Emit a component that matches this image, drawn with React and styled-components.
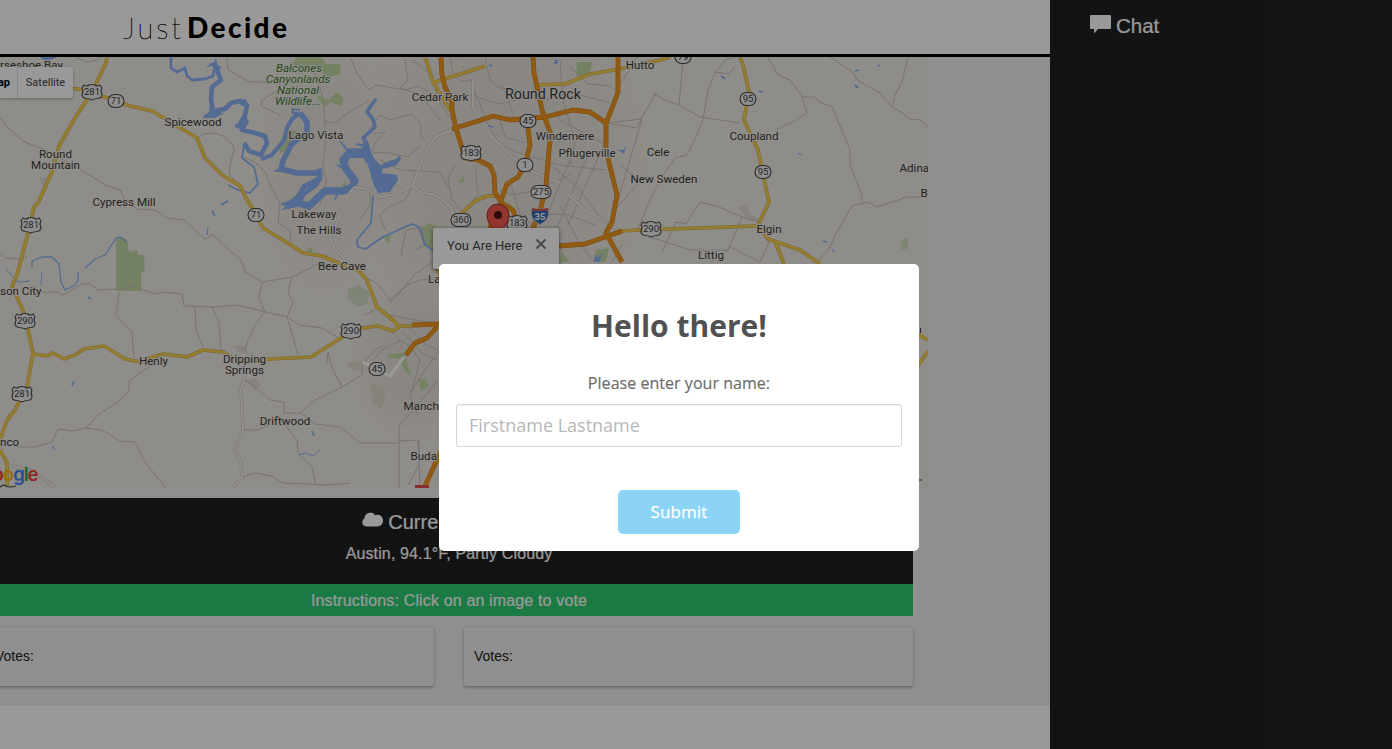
import React from "react";
import styled, { createGlobalStyle } from "styled-components";

const GlobalStyle = createGlobalStyle`
  * { box-sizing: border-box; }
  html, body { margin: 0; padding: 0; height: 749px; overflow: hidden; background: #fff; }
  body { font-family: "Liberation Sans", Arial, sans-serif; color: #212121; }
`;

const Shell = styled.div`
  position: relative;
  display: flex;
  width: 1392px;
  height: 749px;
  overflow: hidden;
`;

const Main = styled.main`
  width: 1050px;
  height: 749px;
  overflow: hidden;
  display: flex;
  flex-direction: column;
  background: #fff;
`;

const Header = styled.header`
  height: 57px;
  flex: none;
  border-bottom: 3px solid #000;
  padding-left: 123px;
  display: flex;
  align-items: center;
  color: #000;
  font-family: Lato, sans-serif;
`;

const LogoThin = styled.span`
  font-size: 29px;
  font-weight: 100;
  letter-spacing: 3px;
  width: 64px;
  white-space: nowrap;
  -webkit-text-stroke: 0.35px #000;
`;

const LogoBold = styled.span`
  font-size: 28px;
  font-weight: 900;
  letter-spacing: 2.4px;
`;

const Page = styled.div`
  height: 649px;
  background: #efefef;
  display: flex;
  flex-direction: column;
`;

const MapFrame = styled.section`
  position: relative;
  width: 928px;
  height: 431px;
  flex: none;
  overflow: hidden;
`;

const MapSvg = styled.svg`
  display: block;
  font-family: Roboto, sans-serif;
`;

const MapControls = styled.div`
  position: absolute;
  top: 10px;
  left: 0;
  width: 73px;
  height: 31px;
  display: flex;
  align-items: center;
  background: #fff;
  border-radius: 0 2px 2px 0;
  box-shadow: 0 1px 3px rgba(0, 0, 0, 0.3);
  font: 11px Roboto, sans-serif;
  color: #444;
`;

const MapTab = styled.span`
  width: ${(p) => p.$width}px;
  height: 100%;
  display: flex;
  align-items: center;
  justify-content: ${(p) => (p.$active ? "flex-end" : "center")};
  padding-right: ${(p) => (p.$active ? "7px" : "0")};
  font-weight: ${(p) => (p.$active ? 700 : 400)};
  color: ${(p) => (p.$active ? "#000" : "#444")};
  border-right: ${(p) => (p.$active ? "1px solid #e2e2e2" : "0")};
`;

const InfoWindow = styled.div`
  position: absolute;
  left: 433px;
  top: 171px;
  width: 126px;
  height: 41px;
  padding: 10px 12px 0 14px;
  display: flex;
  justify-content: space-between;
  background: #fff;
  border-radius: 2px;
  box-shadow: 0 1px 4px rgba(0, 0, 0, 0.6);
  font: 13px/15px Roboto, sans-serif;
  color: #444;
`;

const CloseIcon = styled.svg`
  margin-top: 0;
`;

const Wide = styled.div`
  width: 928px;
  margin-left: -15px;
`;

const Weather = styled(Wide)`
  height: 86px;
  margin-top: 10px;
  padding-top: 11px;
  background: #212121;
  color: #fff;
  display: flex;
  flex-direction: column;
  align-items: center;
`;

const WeatherTitle = styled.div`
  display: flex;
  align-items: center;
  gap: 5px;
  height: 26px;
  font-size: 20px;
  -webkit-text-stroke: 0.2px #fff;
  svg { margin-top: -6px; }
`;

const WeatherText = styled.div`
  margin-top: 8px;
  font-size: 16px;
  line-height: 21px;
  letter-spacing: 0.13px;
  -webkit-text-stroke: 0.2px #fff;
`;

const Instructions = styled(Wide)`
  height: 32px;
  background: #2ecc71;
  color: #fff;
  font-size: 16px;
  line-height: 33px;
  letter-spacing: 0.15px;
  text-align: center;
  -webkit-text-stroke: 0.2px #fff;
`;

const Cards = styled(Wide)`
  margin-top: 11px;
  display: flex;
  justify-content: space-between;
`;

const Card = styled.div`
  width: 449px;
  height: 59px;
  padding-left: 10px;
  font-size: 14px;
  line-height: 59px;
  color: #212121;
  background: #efefef;
  border-radius: 2px;
  box-shadow: 0 2px 3px rgba(0, 0, 0, 0.22), 0 0 2px rgba(0, 0, 0, 0.18);
`;

const Sidebar = styled.aside`
  flex: 1;
  background: #212121;
  color: #fff;
  padding: 13px 0 0 40px;
`;

const ChatTitle = styled.div`
  display: flex;
  align-items: center;
  gap: 5px;
  font-size: 20.5px;
  line-height: 26px;
  -webkit-text-stroke: 0.2px #fff;
  svg { margin-top: -3px; }
`;

const Overlay = styled.div`
  position: absolute;
  inset: 0;
  background: rgba(0, 0, 0, 0.4);
`;

const Modal = styled.form`
  position: absolute;
  left: 439px;
  top: 264px;
  width: 480px;
  height: 287px;
  padding: 17px;
  border-radius: 5px;
  background: #fff;
  font-family: "Open Sans", sans-serif;
  display: flex;
  flex-direction: column;
  align-items: center;
`;

const Title = styled.h2`
  margin: 25px 0 0;
  height: 40px;
  font-size: 30px;
  line-height: 40px;
  font-weight: 700;
  color: #515151;
`;

const Prompt = styled.p`
  margin: 24px 0 0;
  font-size: 16px;
  line-height: 26px;
  letter-spacing: 0.04px;
  color: #6b6b6b;
  -webkit-text-stroke: 0.15px #6b6b6b;
`;

const NameInput = styled.input`
  width: 446px;
  height: 43px;
  margin: 8px 0 0;
  padding: 0 12px 2px;
  border: 1px solid #d7d7d7;
  border-radius: 3px;
  box-shadow: inset 0 1px 1px rgba(0, 0, 0, 0.06);
  font: 18px "Open Sans", sans-serif;
  outline: none;
  &::placeholder { color: #b8b8b8; opacity: 1; }
`;

const Submit = styled.button`
  width: 122px;
  height: 44px;
  margin-top: 43px;
  padding: 0 0 2px;
  border: 0;
  border-radius: 5px;
  background: #8cd4f5;
  color: #fff;
  font: 17px "Open Sans", sans-serif;
  letter-spacing: 0.1px;
  -webkit-text-stroke: 0.25px #fff;
`;

const minorRoads = [
  "0,118 10,130 25,142 45,150 78,168 105,185 120,190 125,200 137,209 155,210 167,218 184,220 205,239 212,235 241,260 245,272 262,282 292,277 318,264",
  "76,57 87,62 97,60 102,57", "197,138 203,134 215,133 223,136 233,145 234,151 230,165 229,173 235,181 240,186",
  "244,157 256,163 266,173 270,185 276,195 280,205 278,223 290,230 291,242", "0,253 5,258 20,259 27,257",
  "40,292 57,292 63,295 82,284 90,284 98,290 119,289 135,287 155,294 163,292 182,294 184,306 215,307 237,305 262,311 287,317 300,325 322,328 342,340",
  "262,282 259,297 265,312 255,325 248,340 245,350", "292,277 288,292 293,303 287,317 291,330 298,355",
  "119,292 116,315 132,332 134,358", "195,307 196,330 203,347", "212,307 219,322 221,350",
  "328,352 332,368 342,387", "245,380 258,390 270,400 284,402 284,413 301,413 315,424 340,427 360,443 399,443",
  "300,413 315,400 342,387 362,375 362,365 375,350 385,345", "150,366 130,380 128,392 115,404 98,415 86,428",
  "17,447 35,447 52,442 58,429 73,431 86,428 102,430 120,441 135,442 145,462 166,488",
  "243,430 256,430 270,425", "285,425 297,440 298,453 312,467 316,485", "242,477 255,473 271,476 283,483 328,485 350,483",
  "683,60 679,105", "652,93 665,100 679,105 700,117 740,123", "735,57 725,60 714,75 708,90 703,120 697,135 687,155 675,158 660,180 650,200 638,229",
  "714,72 729,74 735,66", "768,57 778,75 790,80 802,97 815,97 819,102 832,107 850,150 850,165 862,195 862,203",
  "802,97 807,113 793,122 775,130", "830,57 853,72 857,80 880,93 892,107 903,113 909,119 920,120 928,127",
  "908,57 902,82 895,95 892,107", "920,197 907,197 877,207 868,202 852,206 838,230 828,250 817,262",
  "700,202 717,206 742,217 760,222", "700,202 686,224 676,222 662,253", "742,217 728,250 710,262", "640,233 665,242 690,250 728,250 730,247 760,262 770,240",
  "227,57 228,70 250,82 280,82 278,90 262,100 261,106 280,115", "290,62 315,73 323,98 326,138 323,166 326,180 320,205",
  "350,57 358,75 369,90 376,85 405,90 417,86 430,92", "323,121 335,123 345,115 370,100", "370,128 380,115 390,120 412,114 420,123 421,137 425,140",
  "373,134 385,132 375,143 372,152 389,153 408,157 421,145", "385,230 380,215 390,206 405,200 413,185", "370,193 370,205 360,220",
  "415,250 425,245 418,228 406,230 401,255", "450,57 454,76 461,81 473,81", "405,60 408,80 400,88 420,95 440,120",
  "485,57 490,80 500,88 534,92", "475,97 500,104 535,95", "474,90 486,120 500,145 525,155 560,165 606,170", "500,120 505,137 525,143",
  "502,85 515,118", "560,60 563,100 575,140 570,165", "570,67 588,84 610,86 618,92", "543,100 580,95 610,103", "555,110 560,120 606,145", "606,123 637,128 643,115 656,93",
  "620,85 637,57", "510,180 520,215 540,230", "550,164 580,190 601,219", "570,160 545,220", "606,140 568,225", "590,150 556,230", "500,190 514,195 535,190 570,175",
  "475,165 478,195 460,213", "606,123 642,119 608,234", "620,165 640,181 615,210", "535,215 565,214 595,225", "560,205 580,245 595,262", "622,245 612,262",
  "407,325 425,344 438,350", "402,331 424,355 438,360", "399,340 410,346 420,360 415,380 410,395 418,415", "440,350 425,370 411,392", "390,315 415,320 438,323", "399,488 399,426 418,405 438,380",
  "390,300 407,285 420,280 438,279", "365,315 380,307", "419,440 419,465 408,485", "367,278 378,284 391,302 398,295 415,274 435,260", "400,341 382,350 375,358",
  "399,441 418,440 420,485", "328,352 327,363", "380,160 400,170 440,172 450,190", "455,165 448,178 452,200 462,212", "412,60 432,75 438,100 452,120",
];
const whiteRoads = [
  "453,130 435,137 423,157 413,185 396,194 380,197 367,189 355,187 350,192 338,220 330,237 333,246 347,263",
  "413,185 420,192 435,195 450,206 455,218", "459,57 473,80 473,107 490,135 510,155 533,172 560,183 567,193 585,210 600,218 622,232",
  "245,375 241,390 243,430 235,450 241,463 242,477 232,488", "8,465 30,470 43,478 55,488",
];
const yellowRoads = [
  "107,57 106,63 92,92 75,118 59,146 52,172 38,203 34,207 27,237 17,275 12,286 25,315 28,330 33,353 27,387 15,410 7,420 0,440",
  "70,88 85,90 116,101 130,106 152,111 167,120 197,138 205,158 222,175 240,186 246,198 255,213 263,228 283,240 303,253 322,256 348,267 358,270 367,280 377,307 393,320 400,328",
  "33,354 47,356 53,353 64,359 75,355 84,349 104,346 125,359 140,362 150,358 163,354 187,357 203,350 223,352 232,358 250,362 270,359 290,358 311,357 330,345 350,332 363,328 378,326 393,331 400,326 413,326",
  "0,450 7,463 7,486", "620,231 640,230 757,226", "740,57 743,65 749,92 744,120 758,150 763,175 769,202 758,225 768,239 800,250 820,264",
  "775,241 784,264", "535,85 565,84 590,74 620,69 660,60 670,57", "425,57 433,82 450,110", "435,82 467,72 485,66",
  "460,215 475,201 487,196 497,196", "436,262 439,274 442,282", "917,334 928,340", "928,351 917,367",
];
const orangeRoads = [
  "441,57 442,75 445,87 452,102 452,110 456,128 465,158 478,160 490,166 494,175 495,193 502,203 513,210 518,224",
  "452,129 475,122 493,116 510,120 545,117 573,110 590,112 606,123", "528,128 530,145 525,165 518,177 507,184 500,203",
  "533,57 534,73 542,110 551,135 549,150 546,185 540,212 532,230", "618,57 618,92 612,108 606,123 606,150 617,195 612,222 606,233 622,262",
  "559,246 585,244 622,231", "412,325 440,324", "437,327 427,338 415,343 406,355", "441,451 425,486", "490,229 494,211",
];
const lake = [
  ["171,57 171,68 177,72 185,68 187,76 192,80 205,79 213,76 215,66", 2.8],
  ["215,66 219,75 221,80 212,87 211,99 213,111", 4.5], ["213,111 225,109 231,103 240,101 247,105 245,115 240,124 242,130 255,133 265,136 267,143 261,155 249,151 244,143", 4.6],
  ["244,145 242,158 254,167 258,184 250,193 238,190 228,185", 1.8], ["261,159 272,155 284,140 287,128 292,119 300,113", 4.2],
  ["300,113 307,122 307,133 298,139 291,145 283,161 281,169 297,173 320,173 319,179 304,187 298,198 287,205", 5.5],
  ["287,205 298,203 309,206 325,191 343,191 352,187 355,181 346,169 343,160 350,152 363,152 371,158", 7.5],
  ["371,160 367,143 363,138 375,127 373,119 367,112 370,107 376,99", 3.6], ["383,167 395,164 400,157", 3.6],
  ["373,196 371,223 357,240 358,247 366,249 381,238 407,226 413,224 420,228 425,245 434,251", 1.8],
  ["32,267 32,261 42,257 52,257 59,264 61,282 65,290 75,285 78,280 78,272", 1.3], ["85,268 95,259 105,255 116,238 120,237 127,242", 1.3],
  ["42,272 41,285", 1], ["6,269 18,282 30,281", 1], ["221,205 228,201", 1.7], ["212,211 215,216", 1.5], ["208,227 207,235", 1],
  ["72,386 74,381", 1.7], ["52,446 55,450", 1.2], ["88,297 91,299", 1.8], ["299,455 306,453 313,456 320,450", 1], ["312,431 314,436", 1.7], ["489,65 492,66", 2], ["555,64 557,60", 3],
  ["488,126 494,127", 1.7], ["721,76 725,79", 2], ["759,91 763,92", 1.8], ["855,85 858,88", 2], ["855,71 859,70", 1.6], ["798,153 801,155", 1.3], ["823,241 827,242", 1.6], ["833,249 834,252", 1.3], ["878,65 880,66", 1.5],
  ["213,64 207,67", 1.3], ["249,106 245,109", 1.5], ["365,146 356,144", 2], ["348,151 340,141", 2], ["337,165 346,169", 2], ["335,200 338,192", 2],
  ["282,203 287,205", 3], ["275,171 283,170", 2.5], ["316,171 322,169", 2.5], ["204,117 216,110", 3], ["235,125 243,126", 3], ["300,110 291,109", 2],
];
const parks = [
  "116,240 119,237 125,238 128,242 128,249 131,252 137,250 138,255 144,255 145,269 141,274 141,291 116,291",
  "297,57 322,57 326,64 341,64 340,74 330,77 316,70 302,73 292,66", "318,95 329,100 336,92 344,98 341,106 330,102 326,107 317,99",
  "290,129 298,132 291,150 280,153 279,147", "384,237 392,235 388,245", "421,228 430,223 438,229 433,248 424,246", "577,62 592,62 589,77 576,75",
  "389,354 404,353 411,375 405,372 400,359 388,357", "418,378 426,380 429,387 421,390",
  "596,250 609,248 606,262 594,262", "341,187 346,180 346,187", "308,249 312,247 312,253 304,255", "458,182 464,176 464,183", "562,252 570,262 560,262",
];
const labels = [
  ["rseshoe Bay", 0, 69, "start"], ["Spicewood", 193, 126], ["Round", 55.5, 157.5], ["Mountain", 55.5, 168.500], ["Cypress Mill", 124, 206], ["Lago Vista", 316, 139],
  ["Lakeway", 314, 218], ["The Hills", 319, 234], ["Bee Cave", 342, 270], ["son City", 0, 295, "start"], ["Henly", 153.5, 364.5], ["Dripping", 244.5, 362.500], ["Springs", 244.5, 373.500],
  ["Driftwood", 285, 425], ["nco", 0, 446, "start"], ["Cedar Park", 440, 101], ["Windemere", 565, 140], ["Pflugerville", 587, 157], ["Cele", 658, 156], ["New Sweden", 664, 183],
  ["Hutto", 640, 69], ["Coupland", 754, 140], ["Littig", 711, 259], ["Elgin", 769, 233], ["Adina", 899.5, 172, "start"], ["B", 920.5, 197, "start"], ["La", 428, 283, "start"], ["Manch", 403.5, 410, "start"], ["Buda", 410.5, 460, "start"],
];
const shields = [
  ["281", 92, 92, "us"], ["71", 116, 101], ["281", 31, 225, "us"], ["290", 25, 321, "us"], ["281", 22, 394, "us"], ["71", 256, 215], ["290", 351, 331, "us"], ["45", 377, 369],
  ["183", 471, 153, "us"], ["45", 528, 121], ["1", 525, 165], ["275", 541, 192], ["360", 461, 220], ["183", 517, 223, "us"], ["290", 651, 229, "us"], ["95", 748, 99], ["95", 763, 172], ["79", 683, 57],
];

function Lines({ items, color, width, casing }) {
  return (
    <g fill="none" strokeLinejoin="round">
      {casing && items.map((p, i) => <polyline key={"c" + i} points={p} stroke={casing} strokeWidth={width + 1} />)}
      {items.map((p, i) => <polyline key={i} points={p} stroke={color} strokeWidth={width} />)}
    </g>
  );
}

function Shield({ text, x, y, kind }) {
  const w = text.length === 3 ? 20 : 16;
  return (
    <g transform={`translate(${x} ${y})`}>
      {kind === "us" ? (
        <path d="M-8-7Q-5-5-3-7Q0-8 3-7Q5-5 8-7L10-4Q8-1 10 2Q10 6 6 6.500Q3 6.500 0 8Q-3 6.500-6 6.500Q-10 6-10 2Q-8-1-10-4Z" fill="#ededed" stroke="#4b4b4b" strokeWidth="1.1" />
      ) : (
        <rect x={-w / 2} y="-6.500" width={w} height="13" rx="6.5" fill="#ededed" stroke="#4b4b4b" strokeWidth="1.1" />
      )}
      <text y="3.4" fontSize="9.500" textAnchor="middle" fill="#3c3c3c">{text}</text>
    </g>
  );
}

function AreaMap() {
  return (
    <MapSvg width="928" height="431" viewBox="0 57 928 431">
      <defs>
        <radialGradient id="urban">
          <stop offset="0.5" stopColor="#e2dcd4" />
          <stop offset="1" stopColor="#e2dcd4" stopOpacity="0" />
        </radialGradient>
      </defs>
      <rect y="57" width="928" height="431" fill="#efebe4" />
      <ellipse cx="500" cy="165" rx="150" ry="190" fill="url(#urban)" opacity=".6" />
      <ellipse cx="325" cy="165" rx="70" ry="130" fill="url(#urban)" opacity=".5" />
      <ellipse cx="415" cy="360" rx="65" ry="85" fill="url(#urban)" opacity=".6" />
      <g fill="#e0d9cf">
        <path d="M234 345h10l5 9-12-2zM245 380l10-2 6 8-6 4zM346 363l14-3 5 12-13-2zM370 382l15 7v12l-4 8-8-5zM738 208l8-4 4 9 8 6-8 3zM39 178l9 0-5 8z" />
      </g>
      {parks.map((p, i) => <polygon key={i} points={p} fill="#c4d8a5" />)}
      <polygon points="348,289 358,285 370,292 367,304 358,307 347,298" fill="#d3dcc5" />
      <polygon points="900,240 907,238 909,248 902,250" fill="#d3dcc5" />
      <Lines items={minorRoads} color="#c9c0b9" width={1} />
      <g fill="none" stroke="#8bb1f6" strokeLinejoin="round">
        {lake.map(([p, w], i) => <polyline key={i} points={p} strokeWidth={w} />)}
      </g>
      <g fill="#8bb1f6">
        <polygon points="365,137 362,145 363,150 355,150 343,155 340,163 345,167 350,158 363,158 368,165 373,183 378,193 390,192 398,180 397,175 382,173 383,167 397,165 400,158 392,160 380,165 373,157 368,147" />
        <path d="M288 203l10-10 6-1 12-11 7-3-6 9-12 9-5 10-14 3-5 2zM210 99l5 12 9 2-9 5-12 0 6-6zM241 124l5-8 3 6-4 7-10-1zM213 67l-4-3 5-2 2-4 2 8 3 0-1 4zM235 100l11-1 3 9-8-3zM292 110l13 7 5 9-6-3-4-8-9-1zM595 254l3 4 4-5-2 9h-6zM617 149l6 1 3-4-2 8zM40 57l5 4 5-1 8-3z" />
      </g>
      <Lines items={whiteRoads} color="#f4f2ee" width={2} casing="#c2bbb3" />
      <polyline points="404,357 390,376 363,362" fill="none" stroke="#fff" strokeWidth="3" />
      <Lines items={yellowRoads} color="#f6d052" width={2.7} casing="#cfa94d" />
      <Lines items={orangeRoads} color="#f0971f" width={3.8} casing="#cb7b18" />
      {shields.map(([t, x, y, k], i) => <Shield key={i} text={t} x={x} y={y} kind={k} />)}
      <g transform="translate(540 216)">
        <path d="M-8-7L8-7Q11 3 0 8.500Q-11 3-8-7Z" fill="#3569b5" stroke="#d8d8d8" strokeWidth=".7" />
        <path d="M-8-8Q0-6 8-8V-5H-8Z" fill="#d25357" />
        <text y="4" fontSize="9.5" fontWeight="700" textAnchor="middle" fill="#fff">35</text>
      </g>
      <path d="M415 488v-3h14v3z" fill="#e34b4b" />
      <path d="M0 487q3-3 6-1q4 2 10 0" fill="none" stroke="#444" strokeWidth="1.2" />
      <g fontSize="11.6" fill="#3a3835" stroke="#f1eee8" strokeWidth="2" strokeLinejoin="round" paintOrder="stroke">
        {labels.map(([t, x, y, a], i) => <text key={i} x={x} y={y} textAnchor={a || "middle"}>{t}</text>)}
        <text x="543" y="99" textAnchor="middle" fontSize="14.3">Round Rock</text>
        <g fontStyle="italic" fontSize="11.6" textAnchor="middle" fill="#3c7a31">
          <text x="299" y="72">Balcones</text>
          <text x="298" y="83">Canyonlands</text>
          <text x="298" y="94">National</text>
          <text x="298" y="105">Wildlife...</text>
        </g>
      </g>
      <text x="37.5" y="481" textAnchor="end" fontFamily="Inter, sans-serif" fontSize="18.5" fontWeight="600" letterSpacing="-1">
        <tspan fill="#4285f4">G</tspan><tspan fill="#ea4335">o</tspan><tspan fill="#fbbc05">o</tspan><tspan fill="#4285f4">g</tspan><tspan fill="#34a853">l</tspan><tspan fill="#ea4335">e</tspan>
      </text>
      <path d="M498 242C497 229 487 226 487 215a11 11 0 0 1 22 0C509 226 499 229 498 242Z" fill="#f2594e" stroke="#9d302a" strokeWidth="1" />
      <circle cx="498" cy="215" r="4" fill="#4f1412" />
      <path d="M920.500 328v5M918 480h4" stroke="#444" fill="none" />
    </MapSvg>
  );
}

export default function App() {
  return (
    <Shell>
      <GlobalStyle />
      <Main>
        <Header>
          <LogoThin>Just</LogoThin>
          <LogoBold>Decide</LogoBold>
        </Header>
        <Page>
          <MapFrame>
            <AreaMap />
            <MapControls>
              <MapTab $width={18} $active>Map</MapTab>
              <MapTab $width={55}>Satellite</MapTab>
            </MapControls>
            <InfoWindow>
              You Are Here
              <CloseIcon width="12" height="12" viewBox="0 0 12 12">
                <path d="M1.500 1.500l9 9M10.500 1.500l-9 9" stroke="#7d7d7d" strokeWidth="2" />
              </CloseIcon>
            </InfoWindow>
          </MapFrame>
          <Weather>
            <WeatherTitle>
              <svg width="21" height="15" viewBox="0 0 21 15">
                <path d="M4.500 14.500A4.300 4.300 0 0 1 2.400 6.500A6 6 0 0 1 13.300 3.200A5.600 5.600 0 0 1 21 8.800A5.600 5.600 0 0 1 15.500 14.500Z" fill="#fff" />
              </svg>
              Current Weather
            </WeatherTitle>
            <WeatherText>Austin, 94.1°F, Partly Cloudy</WeatherText>
          </Weather>
          <Instructions>Instructions: Click on an image to vote</Instructions>
          <Cards>
            <Card>Votes:</Card>
            <Card>Votes:</Card>
          </Cards>
        </Page>
      </Main>
      <Sidebar>
        <ChatTitle>
          <svg width="21" height="19" viewBox="0 0 21 19">
            <path d="M1 0H20Q21 0 21 1V13Q21 14 20 14H8L4 18.500V14H1Q0 14 0 13V1Q0 0 1 0Z" fill="#fff" />
          </svg>
          Chat
        </ChatTitle>
      </Sidebar>
      <Overlay />
      <Modal onSubmit={(e) => e.preventDefault()}>
        <Title>Hello there!</Title>
        <Prompt>Please enter your name:</Prompt>
        <NameInput placeholder="Firstname Lastname" />
        <Submit>Submit</Submit>
      </Modal>
    </Shell>
  );
}
